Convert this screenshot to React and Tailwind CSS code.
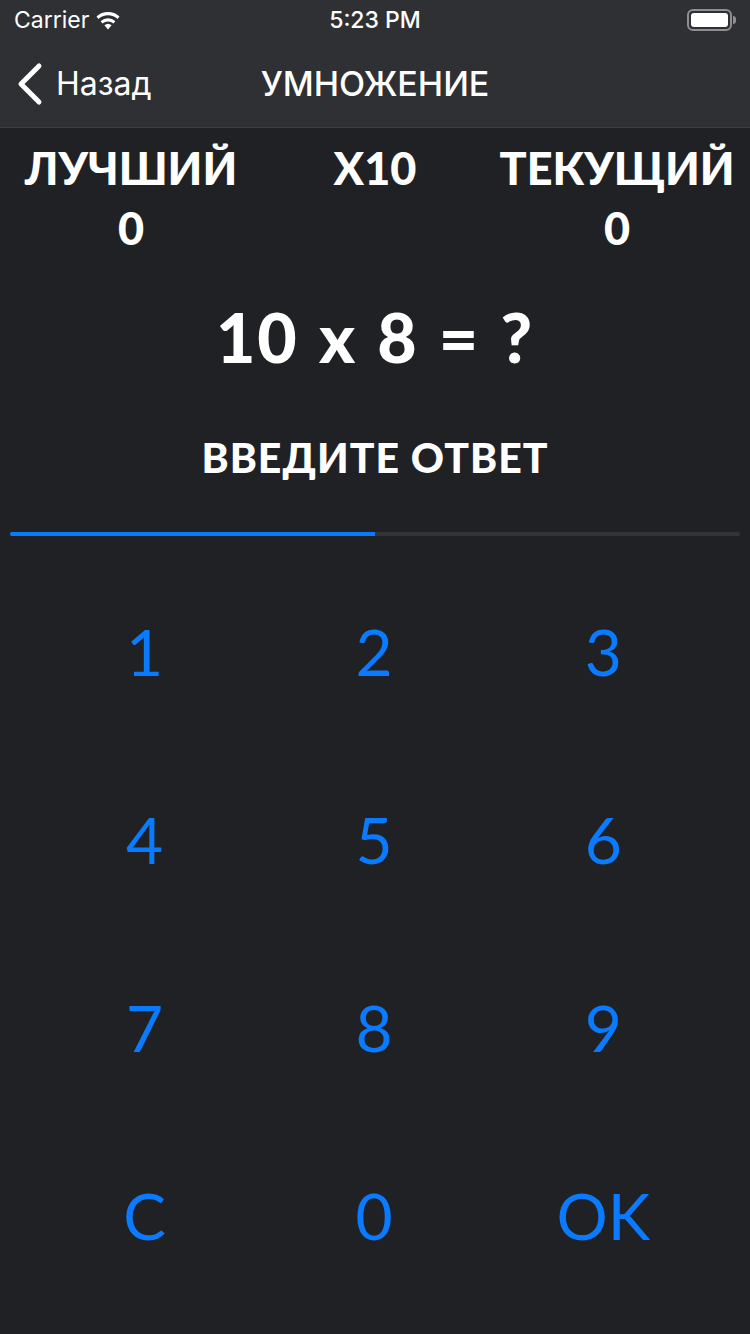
import React from 'react';

// Multiplication practice screen
const KEYS = ['1', '2', '3', '4', '5', '6', '7', '8', '9', 'C', '0', 'OK'];

const StatusBar = () => (
  <div className="h-10 flex items-center justify-between px-[14px] text-white text-[23px] font-['Inter',sans-serif]">
    <div className="flex items-center gap-[6px]">
      <span>Carrier</span>
      <svg width="26" height="20" viewBox="0 0 26 20" fill="white">
        <path d="M13 19.5l-3.6-4.2a5.6 5.6 0 0 1 7.2 0z" />
        <path d="M5.6 11.2a11 11 0 0 1 14.8 0l-2 2.3a8 8 0 0 0-10.8 0z" />
        <path d="M1.5 6.6a17 17 0 0 1 23 0l-2 2.3a14 14 0 0 0-19 0z" />
      </svg>
    </div>
    <span className="absolute left-1/2 -translate-x-1/2 font-medium">5:23 PM</span>
    <div className="flex items-center">
      <div className="w-[45px] h-[22px] rounded-[6px] border-2 border-[#8e8e93] p-[2px]">
        <div className="w-full h-full rounded-[3px] bg-white" />
      </div>
      <div className="w-[3px] h-[8px] rounded-r bg-[#8e8e93] ml-[1px]" />
    </div>
  </div>
);

const NavBar = () => (
  <div className="h-[88px] flex items-center relative border-b border-[#3c3d41]">
    <div className="flex items-center pl-[16px] gap-[12px] text-white">
      <svg width="28" height="44" viewBox="0 0 28 44" fill="none" stroke="white" strokeWidth="5" strokeLinecap="round" strokeLinejoin="round">
        <path d="M23 4L5 22l18 18" />
      </svg>
      <span className="text-[32px] font-['Inter',sans-serif]">Назад</span>
    </div>
    <span className="absolute left-1/2 -translate-x-1/2 text-white text-[34px] font-medium font-['Inter',sans-serif]">
      УМНОЖЕНИЕ
    </span>
  </div>
);

export default function App() {
  return (
    <div className="w-[750px] h-[1334px] bg-[#202125] flex flex-col font-['Lato',sans-serif] overflow-hidden">
      <div className="bg-[#2f3033]">
        <StatusBar />
        <NavBar />
      </div>

      {/* Score row */}
      <div className="grid grid-cols-[262px_1fr_262px] pt-[10px] text-white font-black text-[45px] leading-[60px]">
        <div className="flex flex-col items-center">
          <span>ЛУЧШИЙ</span>
          <span>0</span>
        </div>
        <span className="text-center">X10</span>
        <div className="flex flex-col items-center pr-[4px]">
          <span>ТЕКУЩИЙ</span>
          <span>0</span>
        </div>
      </div>

      {/* Question */}
      <div className="text-center text-white font-black text-[68px] leading-none mt-[45px] tracking-[2px] [word-spacing:2px]">
        10 x 8 = ?
      </div>
      <div className="text-center text-white font-black text-[41px] leading-none mt-[66px] tracking-wide">
        ВВЕДИТЕ ОТВЕТ
      </div>

      {/* Progress */}
      <div className="mx-[10px] mt-[54px] h-[4px] rounded-full bg-[#333438] overflow-hidden">
        <div className="h-full w-1/2 bg-[#0a7aff]" />
      </div>

      {/* Keypad */}
      <div className="grid grid-cols-3 grid-rows-[repeat(4,188px)] pl-[30px] pr-[32px] mt-[22px]">
        {KEYS.map((k) => (
          <button key={k} className="flex items-center justify-center text-[#0a7aff] text-[64px] font-['Lato',sans-serif]">
            {k}
          </button>
        ))}
      </div>
    </div>
  );
}
